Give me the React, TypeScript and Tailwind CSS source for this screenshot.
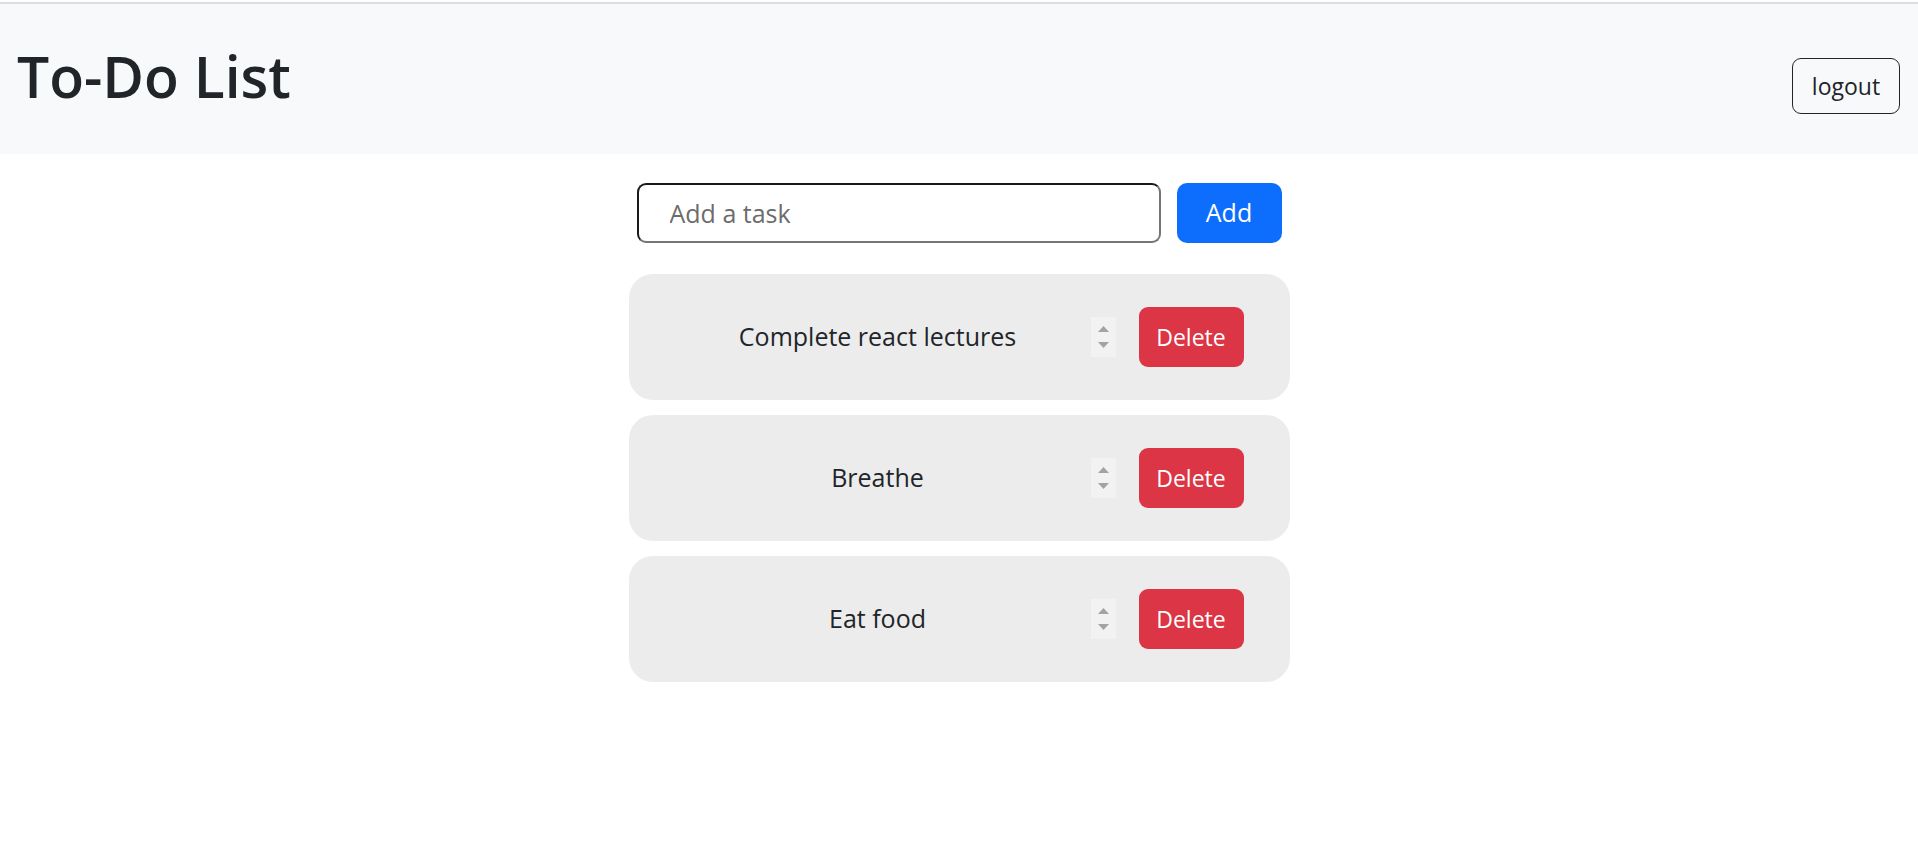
import { useState } from "react";

const font = { fontFamily: '"Open Sans", "Noto Sans", sans-serif' };

const Spinner = () => {
  return (
    <div className="flex h-[40px] w-[25px] flex-col items-center justify-center gap-[10px] bg-[#f2f2f2]">
      <svg width="11" height="6" viewBox="0 0 11 6">
        <path d="M5.5 0 L11 6 L0 6 Z" fill="#a3a3a3" />
      </svg>
      <svg width="11" height="6" viewBox="0 0 11 6">
        <path d="M0 0 L11 0 L5.5 6 Z" fill="#a3a3a3" />
      </svg>
    </div>
  );
};

const TaskCard = ({ title }: { title: string }) => {
  return (
    <div className="flex h-[126px] w-[661px] items-center rounded-[24px] bg-[#ececec] pl-[46px] pr-[46px]">
      <div className="flex-1 text-center text-[25px] text-[#212529]">{title}</div>
      <div className="ml-[10px]">
        <Spinner />
      </div>
      <button className="ml-[23px] h-[60px] w-[105px] rounded-[9px] bg-[#dc3545] text-[23px] text-white">
        Delete
      </button>
    </div>
  );
};

export default function App() {
  const [tasks] = useState(["Complete react lectures", "Breathe", "Eat food"]);

  return (
    <div className="min-h-screen bg-white" style={font}>
      <div className="h-[2px] bg-white" />
      <div className="h-[2px] bg-[#dcdde0]" />
      <header className="flex h-[150px] items-start justify-between bg-[#f8f9fa] pl-[17px] pr-[18px]">
        <h1 className="mt-[36px] text-[57px] font-semibold leading-[72px] text-[#212529]">
          To-Do List
        </h1>
        <button className="mt-[54px] h-[56px] w-[108px] rounded-[9px] border border-[#212529] text-[23px] text-[#212529]">
          logout
        </button>
      </header>

      <main className="flex flex-col items-center">
        <div className="mt-[29px] flex items-center gap-[16px]">
          <input
            placeholder="Add a task"
            className="h-[60px] w-[524px] rounded-[9px] border-2 border-t-[#1a1a1a] border-l-[#1a1a1a] border-r-[#767676] border-b-[#767676] bg-white pl-[31px] text-[25px] text-[#212529] outline-none placeholder:text-[#6c6c6c]"
          />
          <button className="h-[60px] w-[105px] rounded-[10px] bg-[#0d6efd] text-[25px] text-white">
            Add
          </button>
        </div>

        <div className="mt-[31px] flex flex-col gap-[15px]">
          {tasks.map((t, i) => (
            <TaskCard key={i} title={t} />
          ))}
        </div>
      </main>
    </div>
  );
}
